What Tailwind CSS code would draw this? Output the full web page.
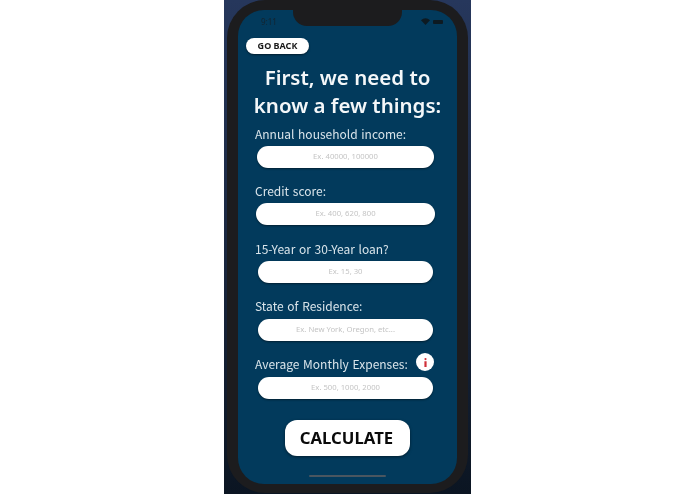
<!DOCTYPE html>
<html lang="en">
<head>
    <meta charset="UTF-8">
    <title>Loan Calculator</title>
    <script src="https://cdn.jsdelivr.net/npm/@tailwindcss/browser@4"></script>
</head>
<body class="h-[494px] w-[695px] overflow-hidden bg-white font-['Noto_Sans',sans-serif]">
    <!-- Wallpaper strip behind the phone -->
    <div class="ml-[224px] h-[494px] w-[247px] bg-gradient-to-b from-[#26375c] via-[#1a2740] to-[#0b1522] pl-[3px] blur-[0.4px]">
        <!-- Phone frame -->
        <div class="h-[493px] w-[241px] rounded-[38px] bg-[#1c1c1e] px-[11px] pt-[10px]">
            <!-- Screen -->
            <div class="relative flex h-[474px] w-[219px] flex-col overflow-hidden rounded-[26px] bg-[#023a5c]">
                <!-- Notch -->
                <div class="absolute left-[55px] top-0 h-[16px] w-[109px] rounded-b-[14px] bg-[#1c1c1e]"></div>

                <!-- Status bar -->
                <div class="flex h-[17px] shrink-0 items-end justify-between pl-[23px] pr-[14px]">
                    <span class="text-[8px] leading-[10px] text-[#14242f]">9:11</span>
                    <div class="flex items-center gap-[3px] pb-[2px]">
                        <svg width="9" height="7" viewBox="0 0 12 9" fill="#0d1a22"><path d="M6 9 0 2.8C3.4-.9 8.6-.9 12 2.8Z"/></svg>
                        <div class="h-[4px] w-[10px] rounded-[1px] bg-[#0d1a22]"></div>
                    </div>
                </div>

                <!-- Back button -->
                <div class="ml-[8px] mt-[11px] flex h-[16px] w-[63px] shrink-0 items-center justify-center rounded-full bg-white shadow-[0_1px_2px_rgba(0,0,0,0.5)]">
                    <span class="text-[9px] font-bold text-[#1a1a1a]">GO BACK</span>
                </div>

                <h1 class="mt-[9px] text-center text-[20.5px] font-semibold leading-[28px] text-[#f4f7f9]">First, we need to<br>know a few things:</h1>

                <!-- Form fields -->
                <div class="mt-[6px] flex flex-col">
                    <label class="pl-[17px] font-['Noto_Sans_CJK_KR',sans-serif] text-[12px] leading-[18px] text-[#d9e4ea] [word-spacing:1px]">Annual household income:</label>
                    <div class="ml-[19px] mt-[3px] flex h-[22px] w-[177px] items-center justify-center rounded-full bg-white text-[7.7px] text-[#c4c4c4] shadow-[0_1px_2px_rgba(0,0,0,0.45)]">Ex. 40000, 100000</div>

                    <label class="mt-[14px] pl-[17px] font-['Noto_Sans_CJK_KR',sans-serif] text-[12px] leading-[18px] text-[#d9e4ea] [word-spacing:1px]">Credit score:</label>
                    <div class="ml-[18px] mt-[3px] flex h-[22px] w-[179px] items-center justify-center rounded-full bg-white text-[7.7px] text-[#c4c4c4] shadow-[0_1px_2px_rgba(0,0,0,0.45)]">Ex. 400, 620, 800</div>

                    <label class="mt-[15px] pl-[17px] font-['Noto_Sans_CJK_KR',sans-serif] text-[12px] leading-[18px] text-[#d9e4ea] [word-spacing:1px]">15-Year or 30-Year loan?</label>
                    <div class="ml-[20px] mt-[3px] flex h-[22px] w-[175px] items-center justify-center rounded-full bg-white text-[7.7px] text-[#c4c4c4] shadow-[0_1px_2px_rgba(0,0,0,0.45)]">Ex. 15, 30</div>

                    <label class="mt-[14px] pl-[17px] font-['Noto_Sans_CJK_KR',sans-serif] text-[12px] leading-[18px] text-[#d9e4ea] [word-spacing:1px]">State of Residence:</label>
                    <div class="ml-[20px] mt-[4px] flex h-[22px] w-[175px] items-center justify-center rounded-full bg-white text-[7.7px] text-[#c4c4c4] shadow-[0_1px_2px_rgba(0,0,0,0.45)]">Ex. New York, Oregon, etc...</div>

                    <div class="mt-[14px] flex h-[18px] items-center justify-between pl-[17px] pr-[23px]">
                        <label class="whitespace-nowrap font-['Noto_Sans_CJK_KR',sans-serif] text-[12px] leading-[18px] text-[#d9e4ea] [word-spacing:1px]">Average Monthly Expenses:</label>
                        <!-- Info badge -->
                        <div class="flex h-[18px] w-[18px] shrink-0 -translate-y-[2px] items-center justify-center rounded-full bg-white">
                            <svg width="3" height="9" viewBox="0 0 3 9" fill="#d0303a"><circle cx="1.5" cy="1.1" r="1.1"/><path d="M.4 3.2h2.2V9H.4z"/></svg>
                        </div>
                    </div>
                    <div class="ml-[20px] mt-[4px] flex h-[22px] w-[175px] items-center justify-center rounded-full bg-white text-[7.7px] text-[#c4c4c4] shadow-[0_1px_2px_rgba(0,0,0,0.45)]">Ex. 500, 1000, 2000</div>
                </div>

                <!-- Calculate button -->
                <div class="mx-auto mt-[21px] flex h-[36px] w-[125px] shrink-0 items-center justify-center rounded-[12px] bg-white pr-[2px] shadow-[0_1px_3px_rgba(0,0,0,0.5)]">
                    <span class="text-[16.7px] font-bold text-[#0a0a0a]">CALCULATE</span>
                </div>

                <!-- Home indicator -->
                <div class="absolute bottom-[7px] left-[71px] h-[2px] w-[77px] rounded-full bg-[#4a5660]"></div>
            </div>
        </div>
    </div>
</body>
</html>
